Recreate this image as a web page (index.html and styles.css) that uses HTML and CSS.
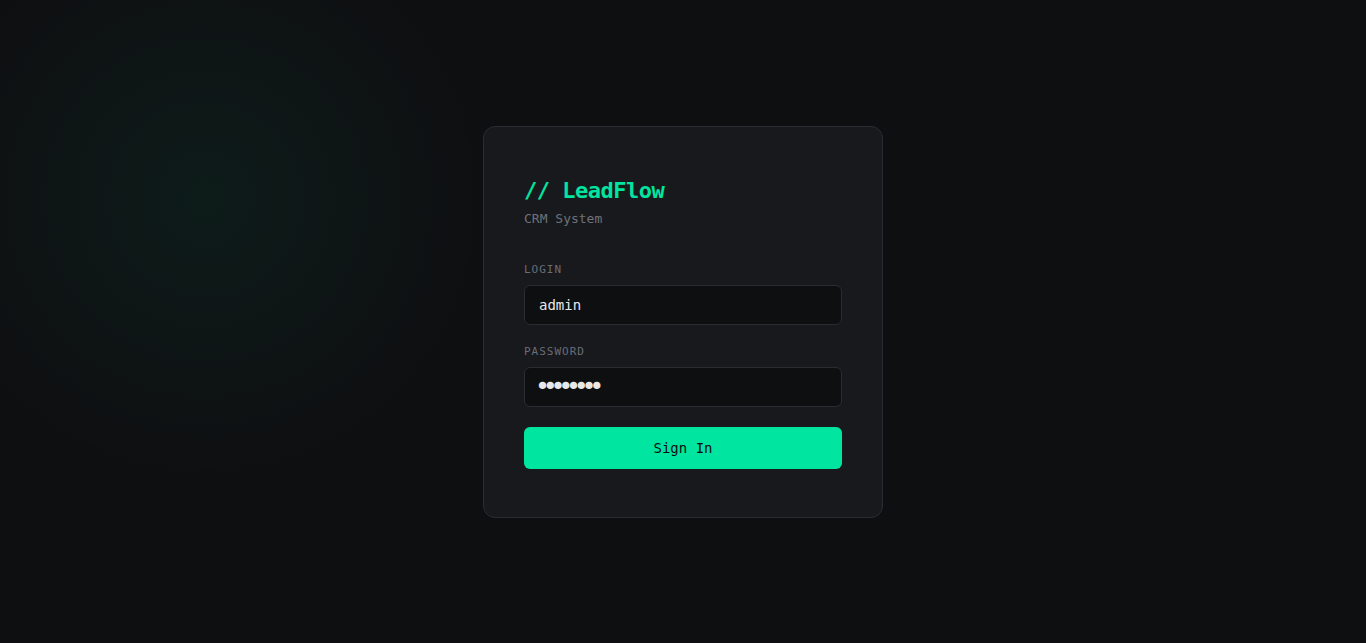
FILE: index.html
```html
<!DOCTYPE html>
<html lang="en">
<head>
<meta charset="utf-8">
<title>LeadFlow — Sign In</title>
<link rel="stylesheet" href="styles.css">
</head>
<body>
<main class="page">
  <form class="card" onsubmit="return false">
    <header class="brand">
      <h1 class="brand-title">// LeadFlow</h1>
      <p class="brand-sub">CRM System</p>
    </header>
    <div class="field">
      <label class="field-label" for="login">LOGIN</label>
      <input class="field-input" id="login" type="text" value="admin">
    </div>
    <div class="field">
      <label class="field-label" for="password">PASSWORD</label>
      <input class="field-input field-input--secret" id="password" type="password" value="password">
    </div>
    <button class="btn-primary" type="submit">Sign In</button>
  </form>
</main>
</body>
</html>
```

FILE: styles.css
```css
* { box-sizing: border-box; }

html, body {
  margin: 0;
  height: 100%;
}

body {
  background-color: #0e0f11;
  background-image: radial-gradient(circle 280px at 15% 31%, rgba(0, 229, 160, 0.06), rgba(0, 229, 160, 0));
  font-family: "DejaVu Sans Mono", "Liberation Mono", monospace;
  color: #e6e6e6;
}

.page {
  min-height: 100%;
  display: flex;
  align-items: center;
  justify-content: center;
}

.card {
  width: 400px;
  background: #18191d;
  border: 1px solid #2a2c31;
  border-radius: 12px;
  padding: 48px 40px;
  display: flex;
  flex-direction: column;
}

.brand {
  margin-bottom: 35px;
}

.brand-title {
  margin: 0;
  font-size: 22px;
  line-height: 31px;
  font-weight: 700;
  color: #00e5a0;
  letter-spacing: -0.5px;
}

.brand-sub {
  margin: 4px 0 0;
  font-size: 13px;
  line-height: 18px;
  color: #6e717a;
}

.field {
  display: flex;
  flex-direction: column;
  margin-bottom: 20px;
}

.field-label {
  font-size: 11px;
  line-height: 14px;
  letter-spacing: 1px;
  color: #6a6d75;
  margin-bottom: 8px;
}

.field-input {
  height: 40px;
  width: 100%;
  background: #0e0f11;
  border: 1px solid #2a2c31;
  border-radius: 6px;
  padding: 0 14px;
  font-family: inherit;
  font-size: 14px;
  color: #e8e8e8;
  outline: none;
}

.field-input--secret {
  font-size: 25px;
  letter-spacing: -7.3px;
  padding-left: 10px;
}

.btn-primary {
  height: 42px;
  width: 100%;
  border: none;
  border-radius: 6px;
  background: #00e5a0;
  color: #0b0c0e;
  font-family: inherit;
  font-size: 14px;
  font-weight: 500;
  cursor: pointer;
}
```
